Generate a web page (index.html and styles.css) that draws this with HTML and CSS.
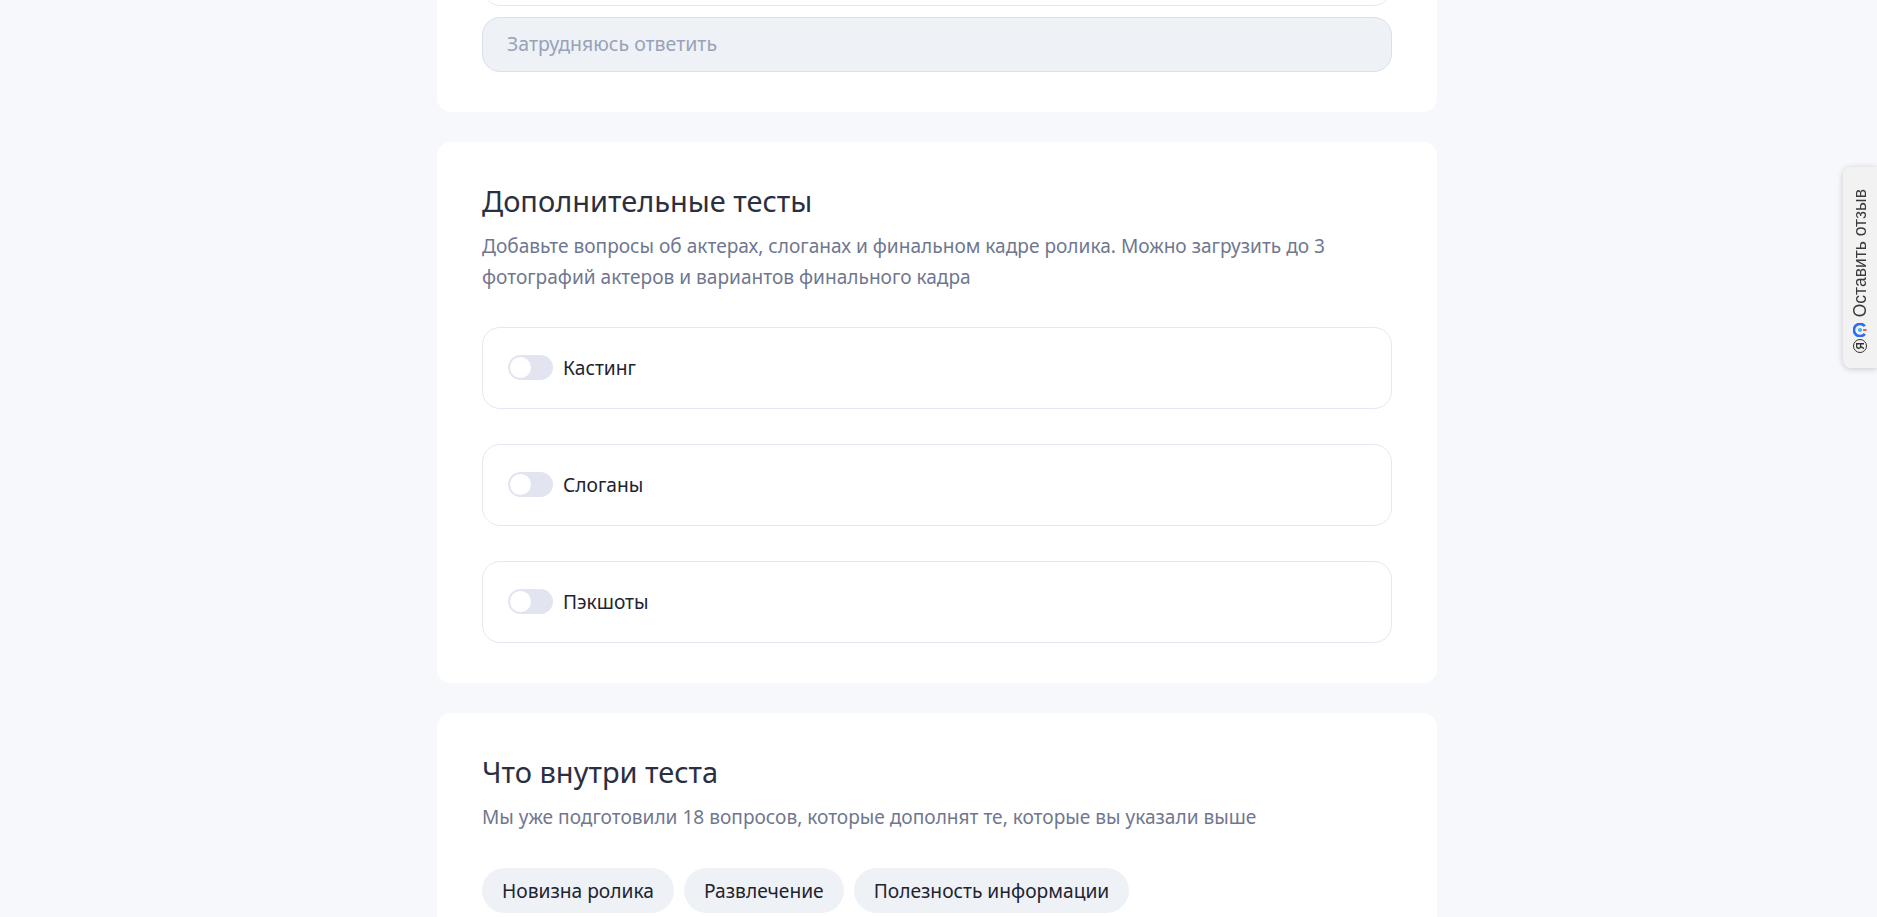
FILE: index.html
```html
<!DOCTYPE html>
<html lang="ru">
<head>
    <meta charset="UTF-8">
    <meta name="viewport" content="width=device-width, initial-scale=1.0">
    <title>Дополнительные тесты</title>
    <link rel="stylesheet" href="styles.css">
</head>
<body>
    <main class="container">
        <section class="card card-answers">
            <div class="answer"></div>
            <div class="answer answer-muted">Затрудняюсь ответить</div>
        </section>

        <section class="card">
            <h2 class="card-title">Дополнительные тесты</h2>
            <p class="card-text">Добавьте вопросы об актерах, слоганах и финальном кадре ролика. Можно загрузить до 3 фотографий актеров и вариантов финального кадра</p>
            <div class="toggle-list">
                <label class="toggle-row"><span class="toggle"></span>Кастинг</label>
                <label class="toggle-row"><span class="toggle"></span>Слоганы</label>
                <label class="toggle-row"><span class="toggle"></span>Пэкшоты</label>
            </div>
        </section>

        <section class="card">
            <h2 class="card-title">Что внутри теста</h2>
            <p class="card-text">Мы уже подготовили 18 вопросов, которые дополнят те, которые вы указали выше</p>
            <div class="chips">
                <span class="chip">Новизна ролика</span>
                <span class="chip">Развлечение</span>
                <span class="chip">Полезность информации</span>
            </div>
        </section>
    </main>

    <aside class="feedback">
        <span class="feedback-label">Оставить отзыв</span>
        <svg class="feedback-logo" width="14" height="14" viewBox="0 0 16 16">
            <path d="M13.5 3.6A7 7 0 1 0 13.5 12.4" fill="none" stroke="#2f6bf0" stroke-width="3"/>
            <circle cx="8" cy="8" r="2.4" fill="#38b6f5"/>
            <rect x="11.5" y="7" width="4" height="2" fill="#f0483e"/>
        </svg>
        <span class="feedback-ya">Я</span>
    </aside>
</body>
</html>
```

FILE: styles.css
```css
:root {
    --page-color: #f6f8fc;
    --border-color: #e5e8f1;
    --muted-color: #eef1f6;
    --title-color: #2a3040;
    --text-color: #6f7790;
}

* {
    box-sizing: border-box;
    margin: 0;
    padding: 0;
    font-family: 'Noto Sans', 'Open Sans', sans-serif;
}

html, body {
    height: 100%;
    overflow: hidden;
}

body {
    background-color: var(--page-color);
    padding-right: 3px;
}

.container {
    width: 1000px;
    margin: -49px auto 0;
    display: flex;
    flex-direction: column;
    gap: 30px;
}

.card {
    background: white;
    border-radius: 14px;
    padding: 38px 45px 40px;
}

.card-answers {
    display: flex;
    flex-direction: column;
    gap: 11px;
    padding-top: 0;
    border-radius: 0 0 14px 14px;
}

.answer {
    height: 55px;
    display: flex;
    align-items: center;
    padding: 0 24px 2px;
    border: 1px solid var(--border-color);
    border-radius: 18px;
    font-size: 19.5px;
}

.answer-muted {
    background-color: var(--muted-color);
    border-color: #d9dfeb;
    color: #98a2b8;
}

.card-title {
    color: var(--title-color);
    font-size: 29px;
    line-height: 42px;
    font-weight: 400;
}

.card-text {
    color: var(--text-color);
    font-size: 19.1px;
    line-height: 31px;
    margin-top: 9px;
}

.toggle-list {
    display: flex;
    flex-direction: column;
    gap: 35px;
    margin-top: 34px;
}

.toggle-row {
    height: 82px;
    display: flex;
    align-items: center;
    gap: 10px;
    padding: 0 25px 2px;
    border: 1px solid var(--border-color);
    border-radius: 18px;
    color: #1e2330;
    font-size: 19.2px;
}

.toggle {
    width: 45px;
    height: 25px;
    padding: 2px;
    border-radius: 13px;
    background-color: #e2e5f0;
}

.toggle::before {
    content: "";
    display: block;
    width: 21px;
    height: 21px;
    border-radius: 50%;
    background: white;
}

.chips {
    display: flex;
    gap: 10px;
    margin-top: 35px;
}

.chip {
    height: 45px;
    display: flex;
    align-items: center;
    padding: 0 20px 1px;
    border-radius: 23px;
    background-color: var(--muted-color);
    color: #1e2330;
    font-size: 19.2px;
}

.feedback {
    position: fixed;
    top: 167px;
    right: 0;
    width: 34px;
    height: 201px;
    display: flex;
    flex-direction: column;
    align-items: center;
    justify-content: flex-end;
    gap: 2px;
    padding: 10px 0 15px;
    background-color: #f2f2f3;
    border-radius: 8px 0 0 8px;
    box-shadow: 0 1px 6px rgba(0, 0, 0, 0.2);
}

.feedback-label {
    margin-bottom: 4px;
    writing-mode: vertical-rl;
    transform: rotate(180deg);
    font-family: 'Liberation Sans', Arial, sans-serif;
    font-size: 17.5px;
    color: #3a3a3a;
}

.feedback-ya {
    width: 14px;
    height: 14px;
    display: flex;
    align-items: center;
    justify-content: center;
    border: 1.5px solid #333;
    border-radius: 50%;
    transform: rotate(-90deg);
    font-family: 'Liberation Sans', Arial, sans-serif;
    font-size: 10px;
    font-weight: bold;
    color: #333;
}
```
